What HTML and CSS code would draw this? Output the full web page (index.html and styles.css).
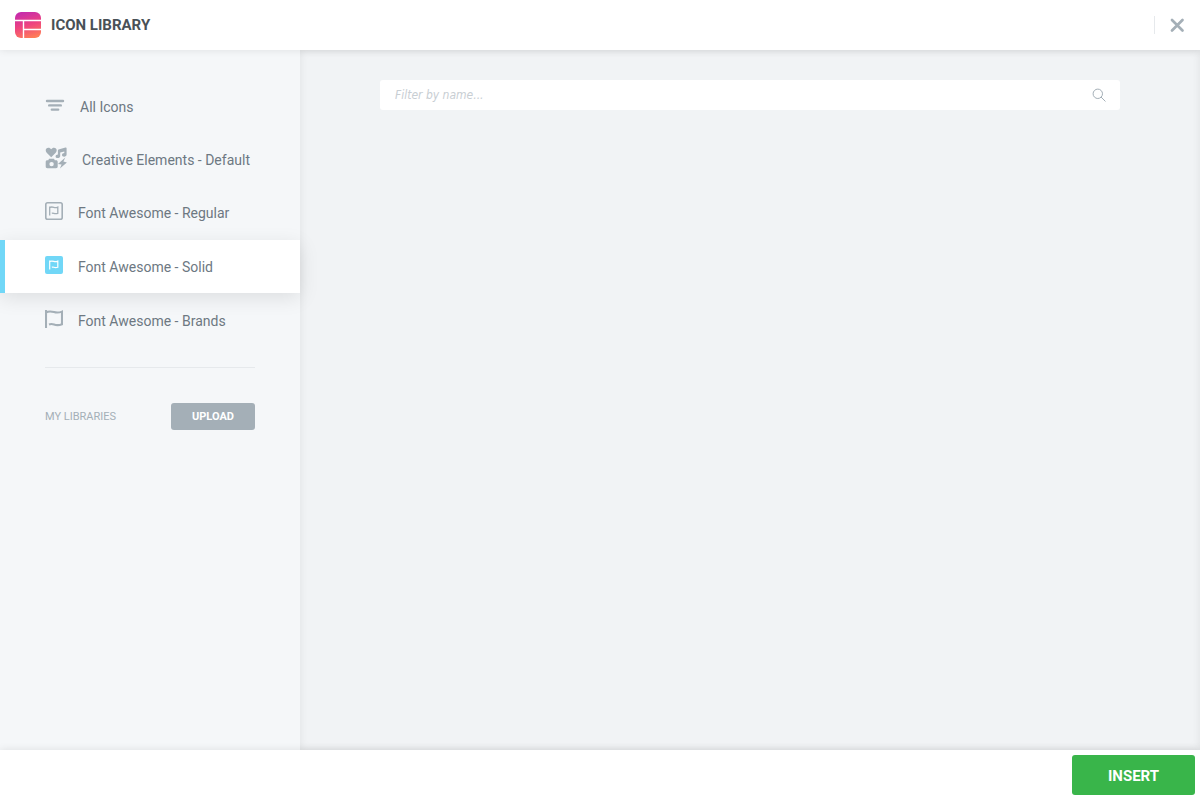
FILE: index.html
```html
<!DOCTYPE html>
<html lang="en">
<head>
    <meta charset="UTF-8">
    <meta name="viewport" content="width=device-width, initial-scale=1.0">
    <title>Icon Library</title>
    <link rel="stylesheet" href="styles.css">
</head>
<body>
    <!-- Header -->
    <header class="header">
        <svg class="logo" width="26" height="26" viewBox="0 0 26 26" aria-hidden="true">
            <defs>
                <linearGradient id="logo-fill" x1="0.35" y1="0" x2="0.65" y2="1">
                    <stop offset="0" stop-color="#c62cab"/>
                    <stop offset="0.5" stop-color="#ee4380"/>
                    <stop offset="1" stop-color="#ff7d57"/>
                </linearGradient>
            </defs>
            <rect width="26" height="26" rx="6" fill="url(#logo-fill)"/>
            <path d="M0 8.5h26M8.5 8.5V26M9 17.5h17" stroke="#fff" stroke-width="1.4" fill="none"/>
        </svg>
        <h1 class="title">Icon Library</h1>
        <button class="close" type="button" aria-label="Close">
            <svg width="15" height="15" viewBox="0 0 15 15">
                <path d="M2 2l10.500 10.500M12.500 2L2 12.500" stroke="#a4afb7" stroke-width="2.700" stroke-linecap="round"/>
            </svg>
        </button>
    </header>

    <div class="content">
        <!-- Sidebar -->
        <aside class="sidebar">
            <nav class="tabs">
                <a class="tab" href="#all">
                    <svg width="20" height="18" viewBox="0 0 20 18">
                        <path d="M2 5h16M4.200 9.400h11.600M6.800 13.600h6.400" stroke="currentColor" stroke-width="2.400" stroke-linecap="round"/>
                    </svg>
                    All Icons
                </a>
                <a class="tab" href="#default">
                    <svg width="22" height="22" viewBox="0 0 22 22" fill="currentColor">
                        <path d="M6.200 10.200L1.700 5.700C-.3 3.400 1 .8 3.400.8c1.200 0 2.100.6 2.800 1.500C6.900 1.400 7.800.8 9 .8c2.400 0 3.700 2.600 1.700 4.900z"/>
                        <path d="M13.500 2.400L20.500.500c.6-.2 1.100.1 1.100.8v6.200c0 1.300-1.100 2.200-2.500 2.200-1.200 0-2.100-.8-2.100-1.700 0-1.200 1.100-1.900 2.300-1.900V4.400l-4.100 1.200v3.300c0 1.300-1.100 2.200-2.500 2.200-1.200 0-2.100-.8-2.100-1.700 0-1.200 1.100-1.900 2.300-1.900V3.500c0-.5.200-.9.600-1.100z"/>
                        <path fill-rule="evenodd" d="M4 11.800h5l.8 1.500h1.200c1.100 0 1.700.6 1.700 1.600v4.600c0 1-.6 1.700-1.700 1.700H2.400c-1.100 0-1.700-.7-1.700-1.700v-4.600c0-1 .6-1.600 1.700-1.600h.9zM6.600 14.900a2.200 2.200 0 1 0 0 4.400 2.200 2.200 0 0 0 0-4.400z"/>
                        <path d="M20.300 10.600L12.900 17l3.700.6-1.700 4 7-6.200-3.500-.9z"/>
                    </svg>
                    Creative Elements - Default
                </a>
                <a class="tab" href="#regular">
                    <svg width="18" height="18" viewBox="0 0 18 18" fill="none" stroke="currentColor">
                        <rect x="0.8" y="0.8" width="16.400" height="16.400" rx="1.800" stroke-width="1.600"/>
                        <path d="M4.700 4.600v8.900M4.700 5.600c1.500-.9 2.700-.7 4.100-.2s2.500.4 4-.3v6.200c-1.700.6-2.700.5-4 0-.8-.3-1.400-.3-2 0" stroke-width="1.300"/>
                    </svg>
                    Font Awesome - Regular
                </a>
                <a class="tab active" href="#solid" aria-current="page">
                    <svg width="18" height="18" viewBox="0 0 18 18" fill="none">
                        <rect width="18" height="18" rx="2" fill="currentColor"/>
                        <path d="M4.700 4.600v8.900M4.700 5.600c1.500-.9 2.700-.7 4.100-.2s2.500.4 4-.3v6.200c-1.700.6-2.700.5-4 0-.8-.3-1.400-.3-2 0" stroke="#fff" stroke-width="1.200"/>
                    </svg>
                    Font Awesome - Solid
                </a>
                <a class="tab" href="#brands">
                    <svg width="18" height="18" viewBox="0 0 18 18" fill="none" stroke="currentColor">
                        <path d="M1 0v18M1 2.500c3-1.700 5.300-1.200 8-.4 2.800.8 5 .7 8-.5v12.600c-3 1.200-5.200 1.300-8 .3-2-.7-3.300-.7-5 0" stroke-width="2.100"/>
                    </svg>
                    Font Awesome - Brands
                </a>
            </nav>
            <div class="libraries">
                <span>My Libraries</span>
                <button class="btn-upload" type="button">Upload</button>
            </div>
        </aside>

        <!-- Icons -->
        <main class="main">
            <label class="search">
                <input type="text" placeholder="Filter by name..." aria-label="Filter by name">
                <svg width="14" height="14" viewBox="0 0 14 14" fill="none" stroke="#a4afb7">
                    <circle cx="5.800" cy="5.800" r="4.700"/>
                    <path d="M9.200 9.200l4 4" stroke-linecap="round"/>
                </svg>
            </label>
        </main>
    </div>

    <!-- Footer -->
    <footer class="footer">
        <button class="btn-insert" type="button">Insert</button>
    </footer>
</body>
</html>
```
FILE: styles.css
```css
* {
    box-sizing: border-box;
}
body {
    display: flex;
    flex-direction: column;
    min-height: 100vh;
    margin: 0;
    font-family: Roboto, "Liberation Sans", sans-serif;
    color: #6d7882;
    background-color: #fff;
}
button {
    border: none;
    cursor: pointer;
    font-family: inherit;
    text-transform: uppercase;
}

/* Header */
.header {
    display: flex;
    align-items: center;
    height: 50px;
    padding: 0 15px;
    background-color: #fff;
    box-shadow: 0 0 8px rgba(0, 0, 0, 0.1);
    z-index: 2;
}
.title {
    flex: 1;
    margin: 0 0 0 10px;
    font-size: 15px;
    font-weight: 700;
    line-height: 20px;
    text-transform: uppercase;
    color: #495157;
}
.close {
    display: flex;
    align-items: center;
    height: 18px;
    padding: 0 0 0 15px;
    border-left: 1px solid #e6e9ec;
    background: none;
}

.content {
    display: flex;
    flex: 1;
}

/* Sidebar */
.sidebar {
    width: 300px;
    padding-top: 30px;
    background-color: #f5f7f9;
    z-index: 1;
}
.tab {
    display: flex;
    align-items: center;
    gap: 15px;
    height: 53px;
    padding-left: 40px;
    border-left: 5px solid transparent;
    font-size: 14px;
    color: #6d7882;
    text-decoration: none;
}
.tab svg {
    margin-bottom: 4px;
    color: #a4afb7;
}
.tab.active {
    margin: 1px 0;
    border-left-color: #71d7f7;
    background-color: #fff;
    box-shadow: 0 5px 20px rgba(0, 0, 0, 0.1);
}
.tab.active svg {
    color: #71d7f7;
}
.libraries {
    display: flex;
    align-items: center;
    justify-content: space-between;
    margin: 20px 45px 0;
    padding-top: 35px;
    border-top: 1px solid #e6e9ec;
    font-size: 11px;
    text-transform: uppercase;
    color: #a4afb7;
}
.btn-upload {
    width: 84px;
    height: 27px;
    padding: 0;
    border-radius: 3px;
    font-size: 11px;
    font-weight: 700;
    color: #fff;
    background-color: #a4afb7;
}

/* Icons */
.main {
    flex: 1;
    padding: 30px 80px;
    background-color: #f1f3f5;
    box-shadow: inset 0 0 8px rgba(0, 0, 0, 0.08);
}
.search {
    display: flex;
    align-items: center;
    height: 30px;
    padding: 0 14px 0 15px;
    border-radius: 3px;
    background-color: #fff;
}
.search input {
    flex: 1;
    padding: 0;
    border: none;
    outline: none;
    font-family: "DejaVu Sans Condensed", "DejaVu Sans", sans-serif;
    font-size: 12px;
    font-style: italic;
    color: #6d7882;
    background: none;
}
.search input::placeholder {
    color: #c8ced3;
}

/* Footer */
.footer {
    display: flex;
    justify-content: flex-end;
    padding: 5px;
    background-color: #fff;
    box-shadow: 0 0 8px rgba(0, 0, 0, 0.1);
    z-index: 2;
}
.btn-insert {
    width: 123px;
    height: 40px;
    padding: 2px 0 0;
    border-radius: 3px;
    font-size: 15px;
    font-weight: 700;
    color: #fff;
    background-color: #39b54a;
}
```
